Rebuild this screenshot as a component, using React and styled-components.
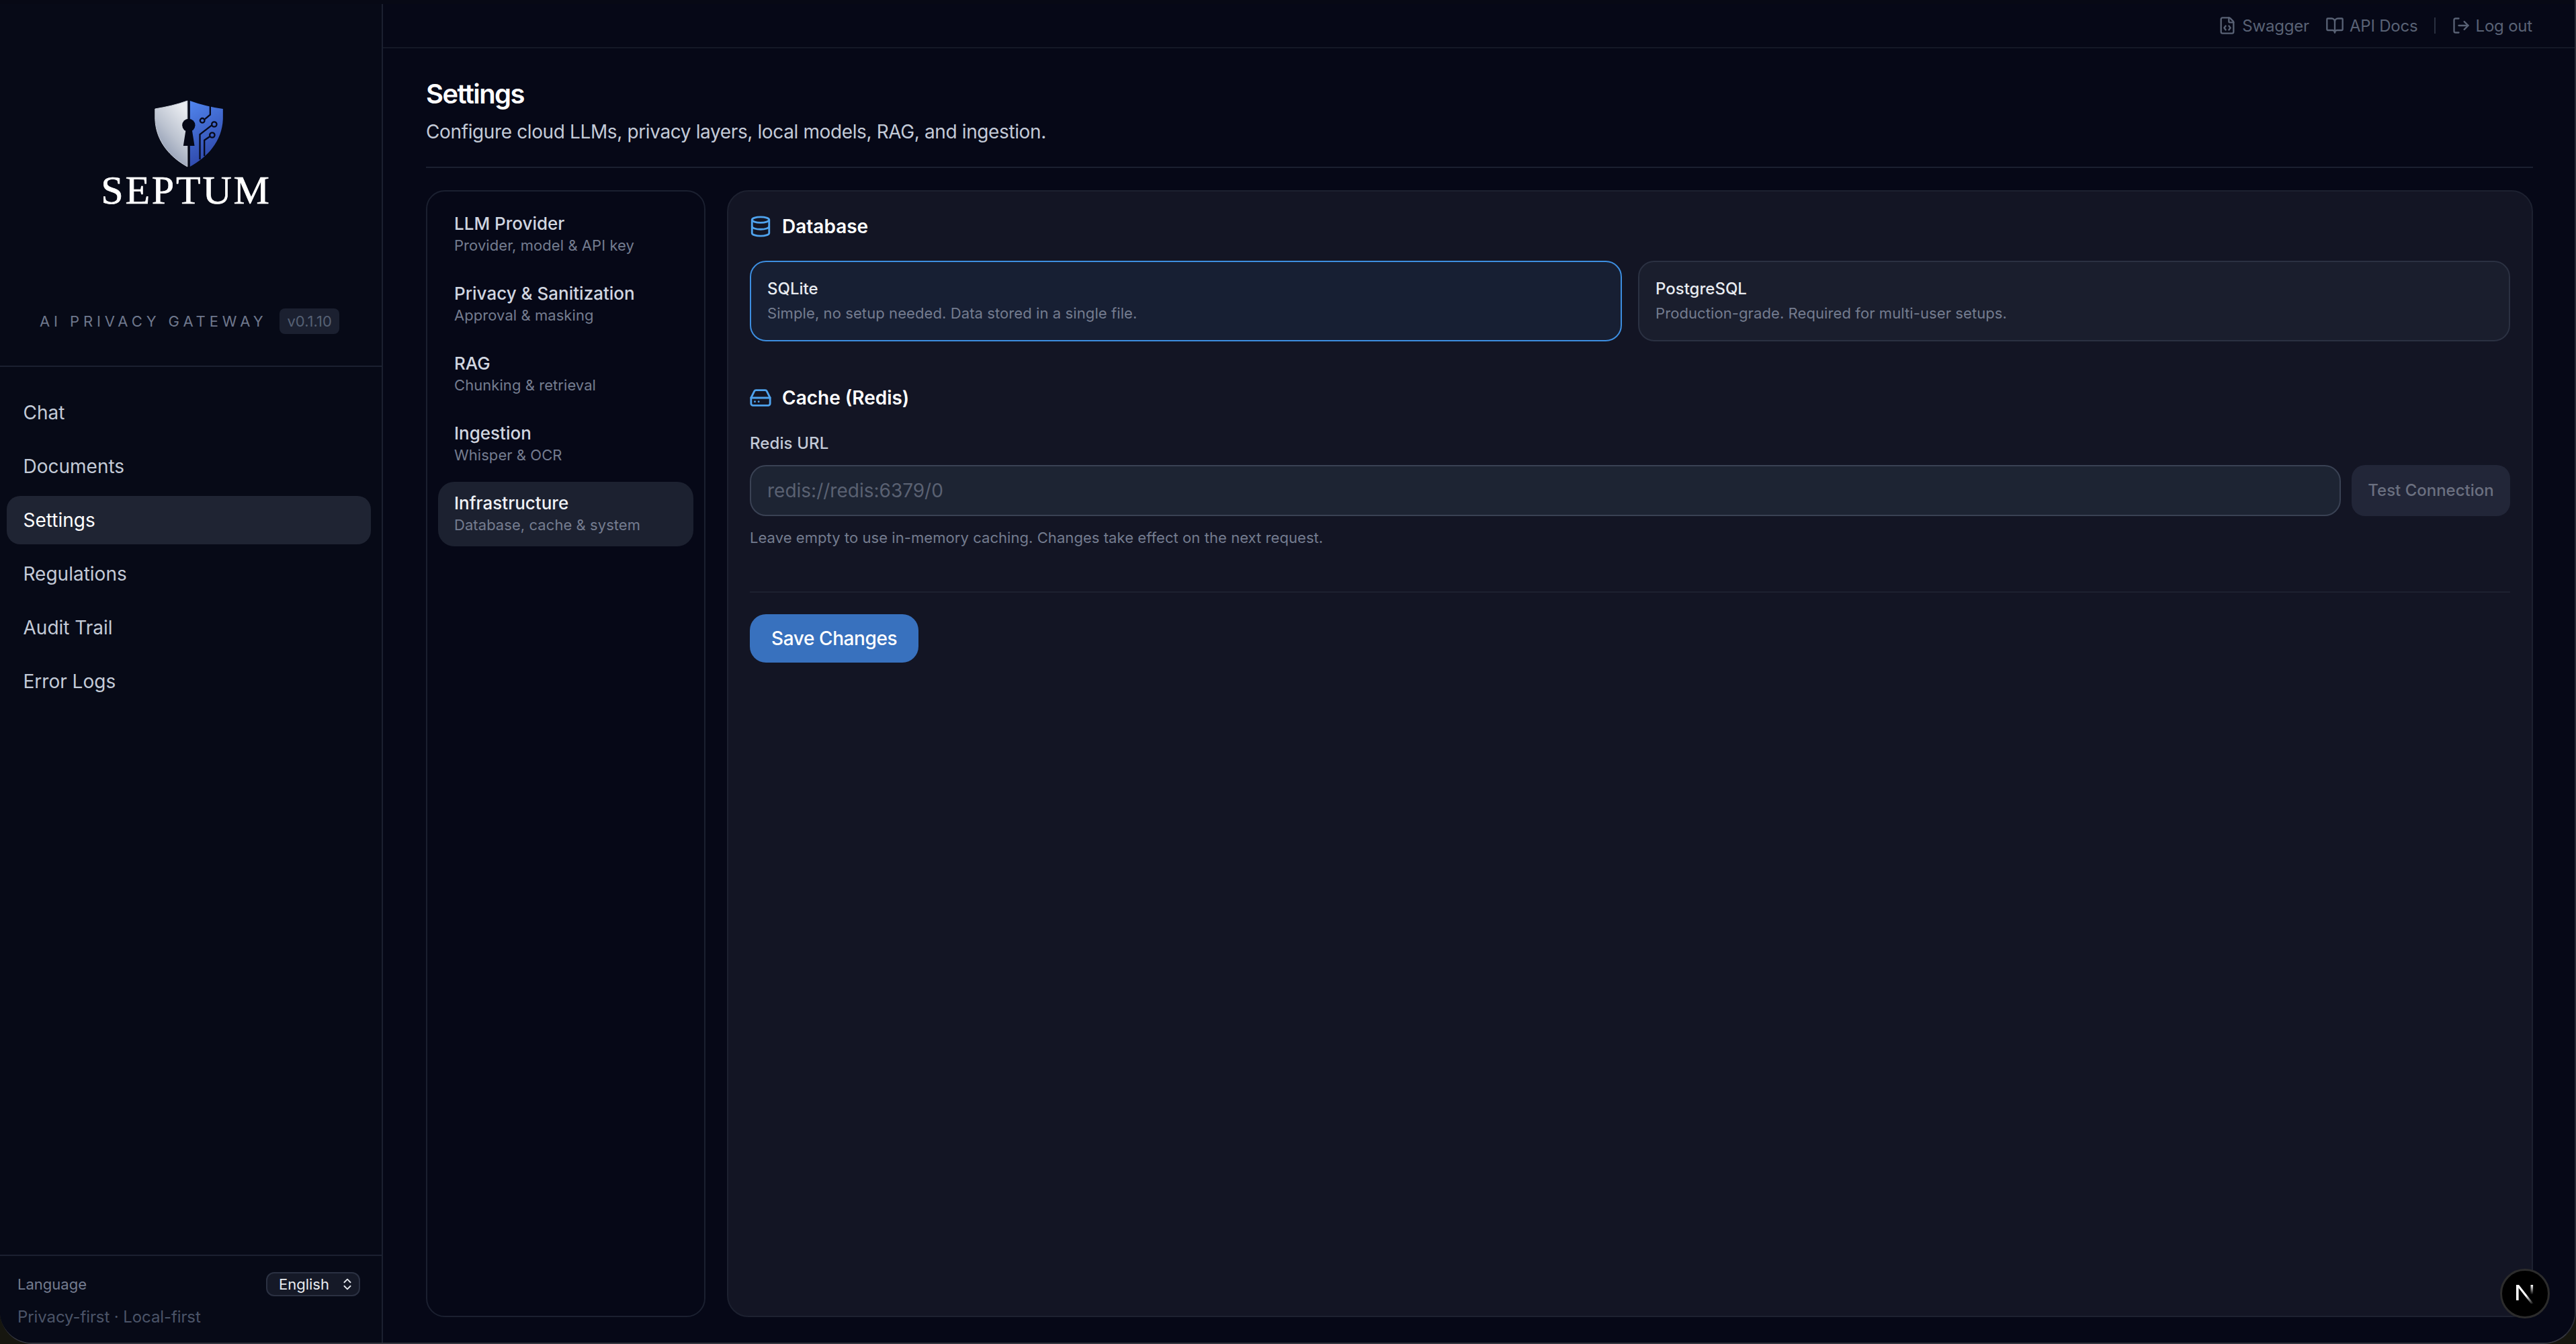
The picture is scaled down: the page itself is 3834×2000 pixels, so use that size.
import React from 'react';
import styled, { createGlobalStyle } from 'styled-components';
import { BookOpen, ChevronsUpDown, Database, FileCode, HardDrive, LogOut } from 'lucide-react';

const GlobalStyle = createGlobalStyle`
	* {
		box-sizing: border-box;
	}
	html,
	body {
		margin: 0;
		padding: 0;
		background: #16160f;
	}
	body {
		font-family: Inter, 'Liberation Sans', sans-serif;
		-webkit-font-smoothing: antialiased;
	}
	input::placeholder {
		color: #5a6172;
		opacity: 1;
	}
`;

const Shield = () => (
	<svg width="103" height="100" viewBox="150 85 308 300" aria-hidden="true">
		<defs>
			<linearGradient id="shieldSilver" x1="0.85" y1="0.1" x2="0.35" y2="1">
				<stop offset="0" stopColor="#e8ebf0" />
				<stop offset="0.5" stopColor="#bcc3d0" />
				<stop offset="1" stopColor="#8490aa" />
			</linearGradient>
			<linearGradient id="shieldBlue" x1="0.2" y1="0" x2="0.5" y2="1">
				<stop offset="0" stopColor="#4f82ea" />
				<stop offset="1" stopColor="#2c44a6" />
			</linearGradient>
		</defs>
		<path
			d="M296 88C250 105 200 116 152 124L152 170C156 270 220 340 296 382Z"
			fill="url(#shieldSilver)"
			stroke="#c9cfd9"
			strokeWidth="3"
		/>
		<path d="M308 88C355 105 405 118 455 124L455 170C451 270 385 340 308 382Z" fill="url(#shieldBlue)" />
		<g fill="none" stroke="#070a1c" strokeWidth="7">
			<path d="M398 110V150L374 170" />
			<circle cx="363" cy="176" r="10" />
			<path d="M352 350V238L404 198" />
			<circle cx="416" cy="193" r="11" />
			<path d="M372 335V264L397 247" />
			<circle cx="407" cy="241" r="11" />
		</g>
		<circle cx="302" cy="197" r="29" fill="#050816" />
		<path d="M290 212L278 289H328L316 212Z" fill="#050816" />
	</svg>
);

const NextMark = () => (
	<svg width="30" height="30" viewBox="0 0 30 30" aria-hidden="true">
		<defs>
			<linearGradient id="nextDiagonal" x1="0" y1="0" x2="1" y2="1">
				<stop offset="0.55" stopColor="#fff" />
				<stop offset="1" stopColor="#fff" stopOpacity="0" />
			</linearGradient>
			<linearGradient id="nextStem" x1="0" y1="0" x2="0" y2="1">
				<stop offset="0" stopColor="#fff" />
				<stop offset="0.8" stopColor="#fff" stopOpacity="0" />
			</linearGradient>
		</defs>
		<rect x="2" y="2" width="3.6" height="23" fill="#fff" />
		<path d="M2 2H6L28 30H24Z" fill="url(#nextDiagonal)" />
		<rect x="23.5" y="2" width="3.6" height="18" fill="url(#nextStem)" />
	</svg>
);

const NAV_ITEMS = ['Chat', 'Documents', 'Settings', 'Regulations', 'Audit Trail', 'Error Logs'];

const SETTINGS_TABS = [
	{ title: 'LLM Provider', hint: 'Provider, model & API key' },
	{ title: 'Privacy & Sanitization', hint: 'Approval & masking' },
	{ title: 'RAG', hint: 'Chunking & retrieval' },
	{ title: 'Ingestion', hint: 'Whisper & OCR' },
	{ title: 'Infrastructure', hint: 'Database, cache & system' },
];

const DB_OPTIONS = [
	{ name: 'SQLite', hint: 'Simple, no setup needed. Data stored in a single file.', selected: true },
	{ name: 'PostgreSQL', hint: 'Production-grade. Required for multi-user setups.', selected: false },
];

const App = () => {
	return (
		<Screen>
			<GlobalStyle />
			<Window>
				<Sidebar>
					<Brand>
						<ShieldWrap>
							<Shield />
						</ShieldWrap>
						<Wordmark>SEPTUM</Wordmark>
						<Tagline>
							<TaglineText>AI PRIVACY GATEWAY</TaglineText>
							<Version>v0.1.10</Version>
						</Tagline>
					</Brand>
					<Nav>
						{NAV_ITEMS.map((item) => (
							<NavItem key={item} $active={item === 'Settings'}>
								{item}
							</NavItem>
						))}
					</Nav>
					<SidebarFooter>
						<LanguageRow>
							<LanguageLabel>Language</LanguageLabel>
							<LanguageSelect>
								English
								<ChevronsUpDown size={22} strokeWidth={2} />
							</LanguageSelect>
						</LanguageRow>
						<Motto>Privacy-first · Local-first</Motto>
					</SidebarFooter>
				</Sidebar>

				<Main>
					<TopBar>
						<TopLink>
							<FileCode size={28} />
							Swagger
						</TopLink>
						<TopLink>
							<BookOpen size={28} />
							API Docs
						</TopLink>
						<TopDivider />
						<TopLink>
							<LogOut size={28} />
							Log out
						</TopLink>
					</TopBar>

					<Content>
						<PageHead>
							<PageTitle>Settings</PageTitle>
							<PageIntro>Configure cloud LLMs, privacy layers, local models, RAG, and ingestion.</PageIntro>
						</PageHead>

						<Columns>
							<TabPanel>
								{SETTINGS_TABS.map((tab) => (
									<Tab key={tab.title} $active={tab.title === 'Infrastructure'}>
										<TabTitle $active={tab.title === 'Infrastructure'}>{tab.title}</TabTitle>
										<TabHint>{tab.hint}</TabHint>
									</Tab>
								))}
							</TabPanel>

							<FormPanel>
								<SectionTitle>
									<Database size={34} />
									Database
								</SectionTitle>
								<OptionGrid>
									{DB_OPTIONS.map((option) => (
										<Option key={option.name} $selected={option.selected}>
											<OptionName>{option.name}</OptionName>
											<OptionHint>{option.hint}</OptionHint>
										</Option>
									))}
								</OptionGrid>

								<CacheSection>
									<SectionTitle>
										<HardDrive size={34} />
										Cache (Redis)
									</SectionTitle>
									<FieldLabel>Redis URL</FieldLabel>
									<FieldRow>
										<TextInput placeholder="redis://redis:6379/0" />
										<TestButton>Test Connection</TestButton>
									</FieldRow>
									<FieldHelp>Leave empty to use in-memory caching. Changes take effect on the next request.</FieldHelp>
								</CacheSection>

								<FormActions>
									<SaveButton>Save Changes</SaveButton>
								</FormActions>
							</FormPanel>
						</Columns>
					</Content>
				</Main>

				<DevBadge>
					<NextMark />
				</DevBadge>
			</Window>
		</Screen>
	);
};

const Screen = styled.div`
	width: 3834px;
	height: 2000px;
	overflow: hidden;
	background: #16160f;
`;

const Window = styled.div`
	position: relative;
	display: flex;
	width: 100%;
	height: 100%;
	padding-top: 6px;
	overflow: hidden;
	background: #070915;
	border-right: 2px solid #2a2c36;
	border-bottom: 2px solid #34363f;
	border-radius: 0 0 48px 48px;
`;

const Sidebar = styled.aside`
	display: flex;
	flex-direction: column;
	flex: 0 0 570px;
	background: #070a17;
	border-right: 2px solid #1b2030;
`;

const Brand = styled.div`
	display: flex;
	flex-direction: column;
	align-items: center;
	height: 540px;
	padding-top: 143px;
	border-bottom: 2px solid #1b2030;
`;

const ShieldWrap = styled.div`
	display: flex;
	padding-right: 5px;
`;

const Wordmark = styled.div`
	margin-top: 3px;
	padding-right: 14px;
	color: #fff;
	font-family: 'Liberation Serif', serif;
	font-size: 60px;
	line-height: 62px;
	letter-spacing: 2.8px;
	-webkit-text-stroke: 0.7px #fff;
`;

const Tagline = styled.div`
	display: flex;
	align-items: center;
	gap: 19px;
	width: 100%;
	margin-top: 145px;
	padding-left: 59px;
`;

const TaglineText = styled.span`
	color: #6f788d;
	font-size: 22px;
	line-height: 38px;
	letter-spacing: 5.9px;
	white-space: nowrap;
`;

const Version = styled.span`
	padding: 0 11px;
	color: #566074;
	font-size: 22px;
	line-height: 38px;
	background: #1b2030;
	border-radius: 8px;
`;

const Nav = styled.nav`
	display: flex;
	flex-direction: column;
	flex: 1;
	gap: 8px;
	padding: 32px 16px 0 10px;
`;

const NavItem = styled.div`
	height: 72px;
	padding: 0 24px 0 24.5px;
	color: ${(props) => (props.$active ? '#ffffff' : '#c3cad7')};
	font-size: 28px;
	line-height: 72px;
	background: ${(props) => (props.$active ? '#1f2433' : 'transparent')};
	border-radius: 20px;
`;

const SidebarFooter = styled.div`
	height: 131px;
	padding: 24px 32px 0 26px;
	border-top: 2px solid #1b2030;
`;

const LanguageRow = styled.div`
	display: flex;
	align-items: center;
	justify-content: space-between;
`;

const LanguageLabel = styled.span`
	color: #747c8f;
	font-size: 22px;
`;

const LanguageSelect = styled.div`
	display: flex;
	align-items: center;
	justify-content: space-between;
	width: 140px;
	height: 36px;
	padding: 0 6px 0 17px;
	color: #e8ebf0;
	font-size: 22px;
	background: #151927;
	border: 2px solid #2b3142;
	border-radius: 12px;
`;

const Motto = styled.div`
	margin-top: 15px;
	color: #4b5468;
	font-size: 24px;
	line-height: 32px;
	letter-spacing: -0.1px;
`;

const Main = styled.main`
	display: flex;
	flex-direction: column;
	flex: 1;
	min-width: 0;
	background: #060817;
`;

const TopBar = styled.header`
	display: flex;
	align-items: center;
	justify-content: flex-end;
	gap: 24px;
	height: 66px;
	padding-right: 63px;
	border-bottom: 2px solid #141826;
`;

const TopLink = styled.a`
	display: flex;
	align-items: center;
	gap: 8px;
	color: #596275;
	font-size: 24px;
	letter-spacing: -0.2px;
`;

const TopDivider = styled.span`
	width: 2px;
	height: 24px;
	background: #2a3040;
`;

const Content = styled.div`
	display: flex;
	flex-direction: column;
	flex: 1;
	min-height: 0;
	padding: 40px 62px 38px 64px;
`;

const PageHead = styled.div`
	padding-bottom: 32px;
	border-bottom: 2px solid #1b2030;
`;

const PageTitle = styled.h1`
	margin: 0;
	color: #fff;
	font-size: 40px;
	font-weight: 600;
	line-height: 56px;
	letter-spacing: -1.6px;
`;

const PageIntro = styled.p`
	margin: 8px 0 0;
	color: #c3cad7;
	font-size: 28px;
	line-height: 40px;
	letter-spacing: -0.38px;
`;

const Columns = styled.div`
	display: flex;
	flex: 1;
	gap: 32px;
	min-height: 0;
	margin-top: 33px;
`;

const TabPanel = styled.div`
	display: flex;
	flex-direction: column;
	flex: 0 0 416px;
	gap: 8px;
	padding: 16px;
	background: #060817;
	border: 2px solid #1b2030;
	border-radius: 28px;
`;

const Tab = styled.div`
	height: 96px;
	padding: 14px 24px 0;
	background: ${(props) => (props.$active ? '#1c2130' : 'transparent')};
	border-radius: 24px;
`;

const TabTitle = styled.div`
	color: ${(props) => (props.$active ? '#f0f2f6' : '#d1d6e0')};
	font-size: 26px;
	font-weight: 450;
	line-height: 36px;
`;

const TabHint = styled.div`
	color: #747c8f;
	font-size: 22px;
	line-height: 28px;
	letter-spacing: 0.06px;
`;

const FormPanel = styled.section`
	flex: 1;
	min-width: 0;
	padding: 32px;
	background: #131524;
	border: 2px solid #1d2130;
	border-radius: 32px;
`;

const SectionTitle = styled.h2`
	display: flex;
	align-items: center;
	gap: 15px;
	margin: 0 0 0 -1px;
	color: #fff;
	font-size: 28px;
	font-weight: 600;
	line-height: 40px;

	svg {
		color: #4fa3ee;
	}
`;

const OptionGrid = styled.div`
	display: grid;
	grid-template-columns: 1fr 1fr;
	gap: 24px;
	margin-top: 31px;
`;

const Option = styled.div`
	height: 120px;
	padding: 24px 24px 0;
	background: ${(props) => (props.$selected ? '#171f33' : '#1a1e2d')};
	border: 2px solid ${(props) => (props.$selected ? '#3d8ee0' : '#2b3142')};
	border-radius: 24px;
`;

const OptionName = styled.div`
	color: #e8ebf0;
	font-size: 24px;
	font-weight: 450;
	line-height: 32px;
`;

const OptionHint = styled.div`
	margin-top: 5px;
	color: #747c8f;
	font-size: 22px;
	line-height: 30px;
	letter-spacing: 0.09px;
`;

const CacheSection = styled.div`
	margin-top: 64px;
`;

const FieldLabel = styled.label`
	display: block;
	margin-top: 32px;
	color: #c3cad7;
	font-size: 24px;
	font-weight: 450;
	line-height: 32px;
	letter-spacing: 0.1px;
`;

const FieldRow = styled.div`
	display: flex;
	gap: 16px;
	margin-top: 16px;
`;

const TextInput = styled.input`
	flex: 1;
	min-width: 0;
	height: 76px;
	padding: 0 24px;
	color: #e8ebf0;
	font-family: inherit;
	font-size: 28px;
	background: #1d2433;
	border: 2px solid #3a4254;
	border-radius: 24px;
	outline: none;
`;

const TestButton = styled.button`
	flex: 0 0 236px;
	height: 76px;
	padding: 0 0 2px;
	color: #6b7080;
	font-family: inherit;
	font-size: 24px;
	font-weight: 500;
	background: #222638;
	border: 0;
	border-radius: 20px;
`;

const FieldHelp = styled.p`
	margin: 16px 0 0;
	color: #747c8f;
	font-size: 22px;
	line-height: 32px;
	letter-spacing: 0.06px;
`;

const FormActions = styled.div`
	margin-top: 64px;
	padding-top: 32px;
	border-top: 2px solid #1d2130;
`;

const SaveButton = styled.button`
	display: block;
	height: 72px;
	padding: 0 32px;
	color: #fff;
	font-family: inherit;
	font-size: 28px;
	font-weight: 500;
	letter-spacing: -0.4px;
	background: #3871be;
	border: 0;
	border-radius: 24px;
`;

const DevBadge = styled.div`
	position: absolute;
	right: 37px;
	bottom: 36px;
	display: flex;
	align-items: center;
	justify-content: center;
	width: 74px;
	height: 74px;
	background: #000;
	border: 3px solid #2c2c2c;
	border-radius: 50%;
`;

export default App;
